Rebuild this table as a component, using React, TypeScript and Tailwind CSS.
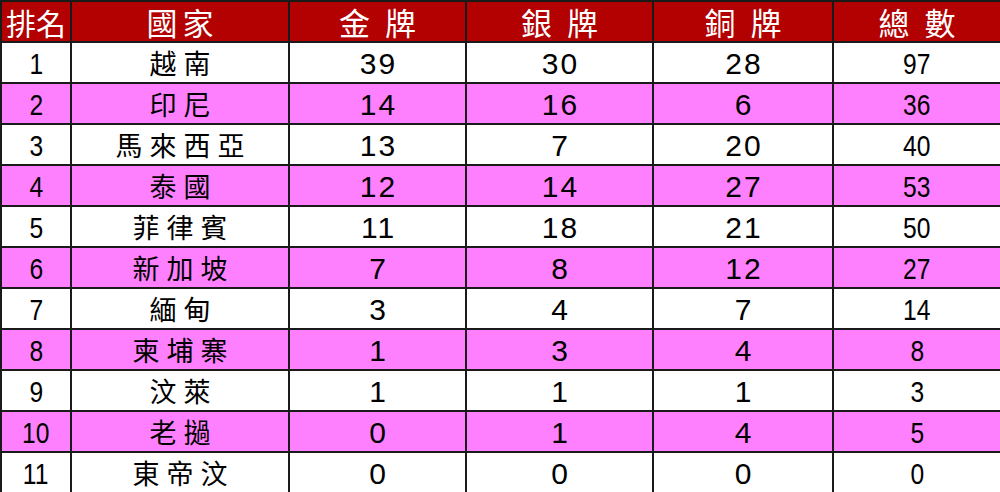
import React from 'react';

const rows = [
  { rank: 1, country: '越南', gold: 39, silver: 30, bronze: 28, total: 97 },
  { rank: 2, country: '印尼', gold: 14, silver: 16, bronze: 6, total: 36 },
  { rank: 3, country: '馬來西亞', gold: 13, silver: 7, bronze: 20, total: 40 },
  { rank: 4, country: '泰國', gold: 12, silver: 14, bronze: 27, total: 53 },
  { rank: 5, country: '菲律賓', gold: 11, silver: 18, bronze: 21, total: 50 },
  { rank: 6, country: '新加坡', gold: 7, silver: 8, bronze: 12, total: 27 },
  { rank: 7, country: '緬甸', gold: 3, silver: 4, bronze: 7, total: 14 },
  { rank: 8, country: '柬埔寨', gold: 1, silver: 3, bronze: 4, total: 8 },
  { rank: 9, country: '汶萊', gold: 1, silver: 1, bronze: 1, total: 3 },
  { rank: 10, country: '老撾', gold: 0, silver: 1, bronze: 4, total: 5 },
  { rank: 11, country: '東帝汶', gold: 0, silver: 0, bronze: 0, total: 0 },
];

const cjk = "font-['Noto_Sans_CJK_TC',sans-serif]";
const num = "font-['Liberation_Sans',Arial,sans-serif]";
const cell = 'border-2 border-[#1a1a1a] p-0 text-center leading-none';

// condensed digits for rank and total columns (no narrow font installed)
const Narrow = ({ children }: { children: React.ReactNode }) => (
  <span className="inline-block scale-x-[0.82]">{children}</span>
);

const App: React.FC = () => {
  return (
    <div className="w-[1000px] h-[492px] bg-white overflow-hidden">
      <table className="w-[1000px] border-collapse table-fixed">
        <colgroup>
          <col className="w-[70px]" />
          <col className="w-[218px]" />
          <col className="w-[177px]" />
          <col className="w-[187px]" />
          <col className="w-[180px]" />
          <col className="w-[168px]" />
        </colgroup>
        <thead>
          <tr className={`h-[41px] bg-[#b30000] text-white font-normal ${cjk}`}>
            <th className={`${cell} text-[30px] font-normal`}>排名</th>
            <th className={`${cell} text-[31px] font-normal tracking-[5px] pl-[5px]`}>國家</th>
            <th className={`${cell} text-[31px] font-normal tracking-[4px] pl-[4px]`}>金 牌</th>
            <th className={`${cell} text-[31px] font-normal tracking-[4px] pl-[4px]`}>銀 牌</th>
            <th className={`${cell} text-[31px] font-normal tracking-[4px] pl-[4px]`}>銅 牌</th>
            <th className={`${cell} text-[31px] font-normal tracking-[4px] pl-[4px]`}>總 數</th>
          </tr>
        </thead>
        <tbody>
          {rows.map((r) => (
            <tr key={r.rank} className={`h-[41px] text-black ${r.rank % 2 === 0 ? 'bg-[#ff80ff]' : 'bg-white'}`}>
              <td className={`${cell} pt-[3px] text-[30px] ${num}`}><Narrow>{r.rank}</Narrow></td>
              <td className={`${cell} text-[27px] tracking-[7px] pl-[7px] ${cjk}`}>{r.country}</td>
              <td className={`${cell} pt-[3px] text-[30px] tracking-[2px] pl-[2px] ${num}`}>{r.gold}</td>
              <td className={`${cell} pt-[3px] text-[30px] tracking-[2px] pl-[2px] ${num}`}>{r.silver}</td>
              <td className={`${cell} pt-[3px] text-[30px] tracking-[2px] pl-[2px] ${num}`}>{r.bronze}</td>
              <td className={`${cell} pt-[3px] text-[30px] ${num}`}><Narrow>{r.total}</Narrow></td>
            </tr>
          ))}
        </tbody>
      </table>
    </div>
  );
};

export default App;
